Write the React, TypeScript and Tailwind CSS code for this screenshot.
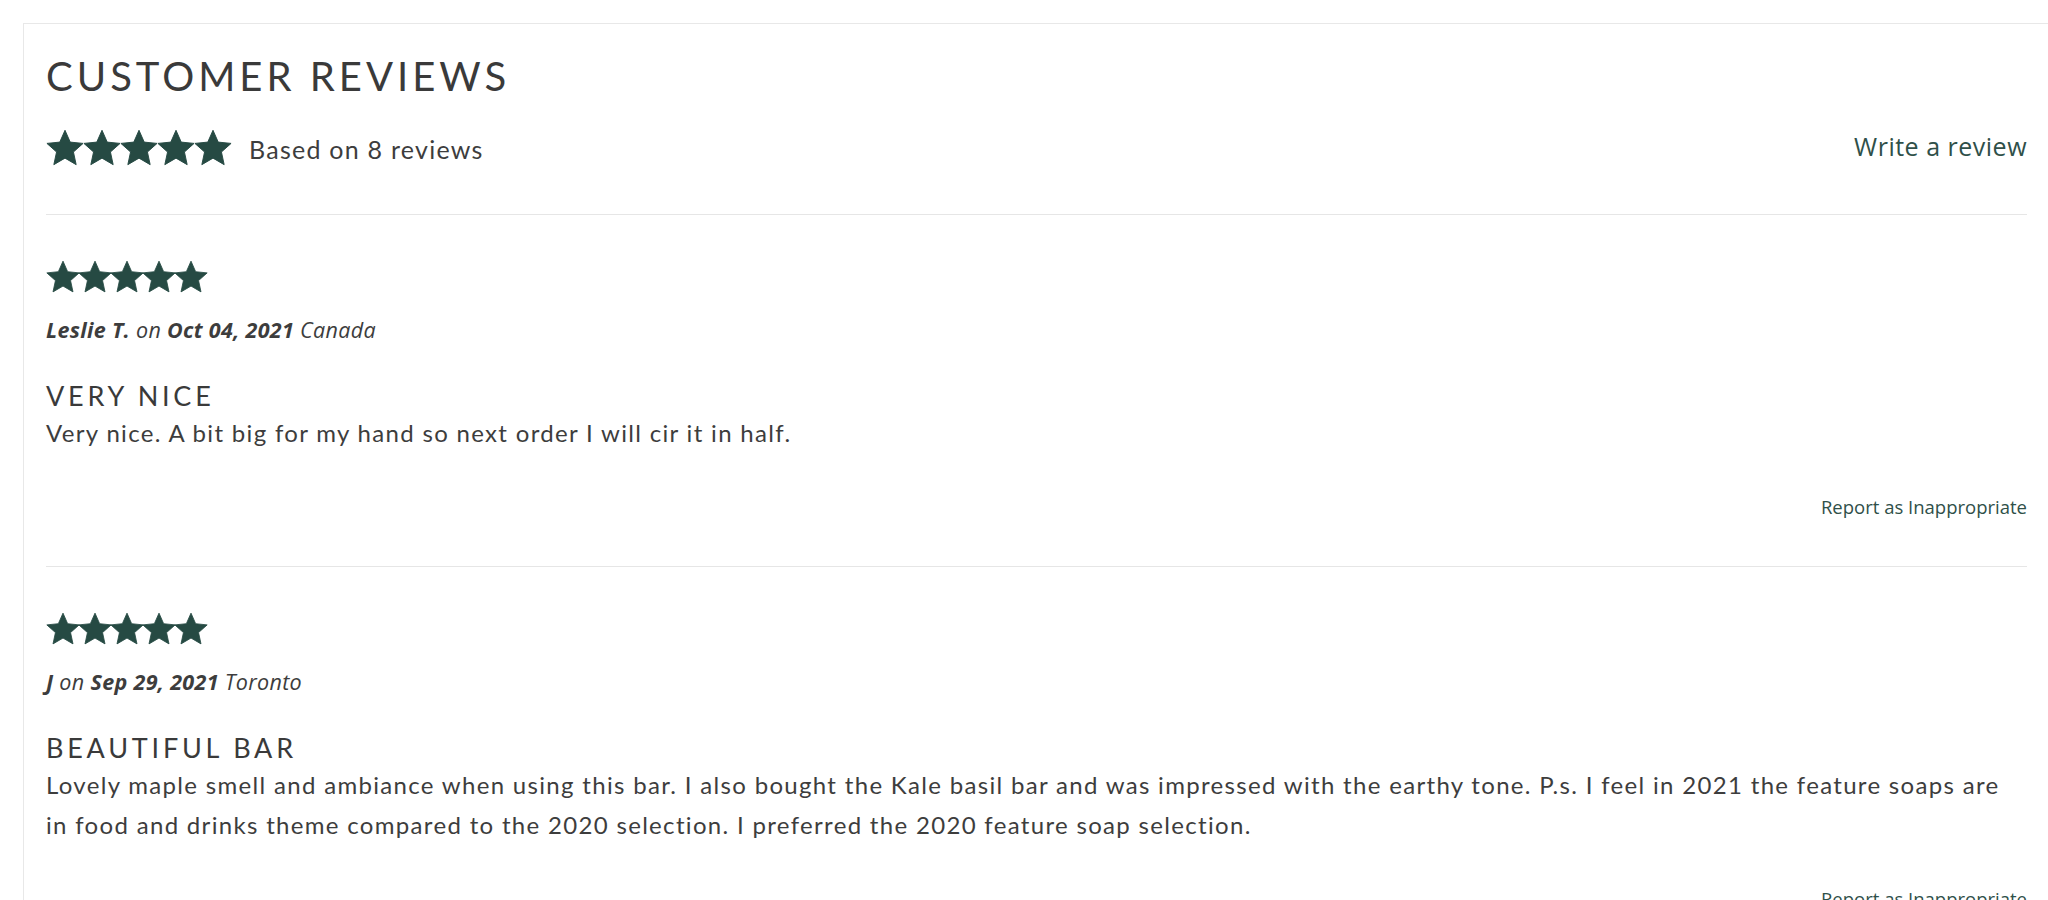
import React from 'react';

const GREEN = '#264a43';

function starPoints(cx: number, cy: number, R: number, r: number) {
  const pts: string[] = [];
  for (let i = 0; i < 10; i++) {
    const rad = i % 2 === 0 ? R : r;
    const a = (Math.PI / 5) * i - Math.PI / 2;
    pts.push(`${(cx + rad * Math.cos(a)).toFixed(2)},${(cy + rad * Math.sin(a)).toFixed(2)}`);
  }
  return pts.join(' ');
}

const STAR = starPoints(12, 12.8, 12, 5.6);

function Stars({ size, gap }: { size: number; gap: string }) {
  return (
    <div className={`flex ${gap}`}>
      {[0, 1, 2, 3, 4].map((i) => (
        <svg key={i} width={size} height={size} viewBox="0 0 24 24">
          <polygon points={STAR} fill={GREEN} strokeLinejoin="round" stroke={GREEN} strokeWidth="0.6" />
        </svg>
      ))}
    </div>
  );
}

type Review = {
  author: string;
  date: string;
  location: string;
  title: string;
  body: string;
};

const reviews: Review[] = [
  {
    author: 'Leslie T.',
    date: 'Oct 04, 2021',
    location: 'Canada',
    title: 'VERY NICE',
    body: 'Very nice. A bit big for my hand so next order I will cir it in half.',
  },
  {
    author: 'J',
    date: 'Sep 29, 2021',
    location: 'Toronto',
    title: 'BEAUTIFUL BAR',
    body: 'Lovely maple smell and ambiance when using this bar. I also bought the Kale basil bar and was impressed with the earthy tone. P.s. I feel in 2021 the feature soaps are in food and drinks theme compared to the 2020 selection. I preferred the 2020 feature soap selection.',
  },
];

function ReviewItem({ review }: { review: Review }) {
  return (
    <div className="border-b border-[#e6e6e6] pt-[45px] pb-[47px]">
      <Stars size={34} gap="-space-x-[2px]" />
      <p className="mt-[22px] text-[21.5px] leading-[28px] italic tracking-[0.015em] text-[#3d3d3d] font-['Open_Sans',sans-serif]">
        <span className="font-bold">{review.author}</span> on{' '}
        <span className="font-bold">{review.date}</span> {review.location}
      </p>
      <h3 className="mt-[36px] text-[27px] leading-[32px] tracking-[0.14em] text-[#3a3a3a] font-['Lato',sans-serif]">
        {review.title}
      </h3>
      <p className="mt-[1px] text-[24px] leading-[40px] tracking-[0.055em] text-[#3d3d3d] font-['Lato',sans-serif]">
        {review.body}
      </p>
      <div className="mt-[42px] flex justify-end">
        <a className="text-[18.5px] leading-[24px] text-[#2f5049] font-['Open_Sans',sans-serif]">
          Report as Inappropriate
        </a>
      </div>
    </div>
  );
}

export default function App() {
  return (
    <div className="h-[900px] overflow-hidden bg-white pt-[23px] pl-[23px]">
      <div className="border-l border-t border-[#e8e8e8] pl-[22px] pr-[21px] min-h-[900px]">
        <div className="border-b border-[#e6e6e6] pt-[28px] pb-[45px]">
          <h2 className="text-[40px] leading-[48px] tracking-[0.1em] text-[#3a3a3a] font-['Lato',sans-serif]">
            CUSTOMER REVIEWS
          </h2>
          <div className="mt-[28px] flex items-center justify-between">
            <div className="flex items-center gap-[17px]">
              <Stars size={38} gap="-space-x-[1px]" />
              <span className="text-[25px] tracking-[0.05em] text-[#3d3d3d] font-['Lato',sans-serif] mt-[3px]">Based on 8 reviews</span>
            </div>
            <a className="text-[25px] tracking-[0.02em] text-[#2f5049] font-['Open_Sans',sans-serif] -mt-[4px]">Write a review</a>
          </div>
        </div>
        {reviews.map((r, i) => (
          <ReviewItem key={i} review={r} />
        ))}
      </div>
    </div>
  );
}
